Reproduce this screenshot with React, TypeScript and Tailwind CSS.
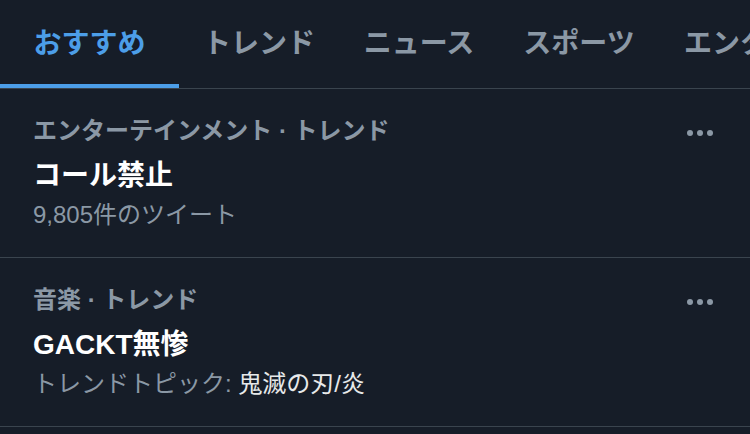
import React from 'react';

const font = { fontFamily: '"Liberation Sans", "Noto Sans CJK JP", sans-serif' };

export default function App() {
  const tabs = ['おすすめ', 'トレンド', 'ニュース', 'スポーツ', 'エンターテインメント'];

  const trends = [
    { category: 'エンターテインメント · トレンド', title: 'コール禁止', sub: <>9,805件のツイート</> },
    {
      category: '音楽 · トレンド',
      title: 'GACKT無惨',
      sub: (
        <>
          トレンドトピック: <span className="text-[#e7e9ea]">鬼滅の刃/炎</span>
        </>
      ),
    },
  ];

  return (
    <div className="w-[750px] h-[434px] overflow-hidden bg-[#161d28]" style={font}>
      {/* タブ */}
      <div className="flex h-[89px] border-b border-[#3a444e] overflow-hidden whitespace-nowrap">
        {tabs.map((t, i) => (
          <div
            key={t}
            className={`relative flex items-center shrink-0 h-[88px] text-[28px] font-bold ${
              i === 0 ? 'w-[179px] justify-center text-[#4c9ee8]' : 'text-[#8b98a5]'
            } ${i > 0 && i < 4 ? 'w-[160px] justify-center' : ''} ${i === 4 ? 'pl-[25px]' : ''}`}
          >
            {t}
            {i === 0 && <div className="absolute left-0 right-0 bottom-0 h-[4px] bg-[#4c9ee8]" />}
          </div>
        ))}
      </div>

      {/* トレンド一覧 */}
      {trends.map((tr) => (
        <div key={tr.title} className="flex justify-between pl-[33px] pr-[37px] pt-[27px] pb-[27px] border-b border-[#3a444e]">
          <div className="flex flex-col">
            <div className="text-[24px] leading-[30px] font-semibold text-[#8b98a5]">{tr.category}</div>
            <div className="mt-[10px] text-[28px] leading-[40px] font-bold text-white">{tr.title}</div>
            <div className="mt-[4px] text-[24px] leading-[30px] text-[#8b98a5]">{tr.sub}</div>
          </div>
          <div className="flex gap-[4px] mt-[14px] h-[6px]">
            <span className="w-[6px] h-[6px] rounded-full bg-[#8b98a5]" />
            <span className="w-[6px] h-[6px] rounded-full bg-[#8b98a5]" />
            <span className="w-[6px] h-[6px] rounded-full bg-[#8b98a5]" />
          </div>
        </div>
      ))}
    </div>
  );
}
